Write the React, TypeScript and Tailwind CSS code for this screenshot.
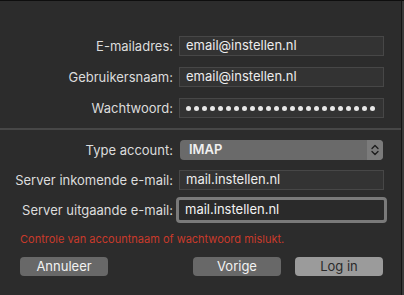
import React from "react";

const font = { fontFamily: "Inter, 'Liberation Sans', sans-serif" };

function Row({ label, children }: { label: string; children: React.ReactNode }) {
  return (
    <div className="flex h-[20px] items-center">
      <div className="w-[179px] shrink-0 pr-[6px] text-right text-[13px] leading-[20px] text-[#dcdcdc]">{label}</div>
      {children}
    </div>
  );
}

function Field({ value }: { value: string }) {
  return (
    <div className="flex h-[20px] w-[205px] shrink-0 items-center border border-[#474747] bg-[#333333] pl-[6px] text-[13px] text-[#ececec]">
      {value}
    </div>
  );
}

const dots = Array.from({ length: 24 }, (_, i) => i);

export default function App() {
  return (
    <div className="flex h-[295px] w-[404px] overflow-hidden border-t border-[#0e0e0e] bg-[#2c2c2c]" style={font}>
      <div className="flex w-[401px] shrink-0 flex-col">
        <div className="flex flex-col gap-[11px] pt-[35px]">
          <Row label="E-mailadres:">
            <Field value="email@instellen.nl" />
          </Row>
          <Row label="Gebruikersnaam:">
            <Field value="email@instellen.nl" />
          </Row>
          <Row label="Wachtwoord:">
            <div className="flex h-[20px] w-[205px] shrink-0 items-center gap-[3px] border border-[#474747] bg-[#333333] pl-[6px]">
              {dots.map((i) => (
                <span key={i} className="h-[5px] w-[5px] shrink-0 rounded-full bg-[#e8e8e8]" />
              ))}
            </div>
          </Row>
        </div>
        <div className="mt-[10px] h-[2px] bg-[#474747]" />
        <div className="mt-[10px] flex flex-col gap-[10px]">
          <Row label="Type account:">
            <div className="ml-[1px] flex h-[20px] w-[203px] shrink-0 overflow-hidden rounded-[4px] bg-[#6a6a6a]">
              <div className="flex flex-1 items-center pl-[9px] text-[13px] font-semibold text-[#f0f0f0]">IMAP</div>
              <div className="flex w-[16px] items-center justify-center bg-[#7b7b7b]">
                <svg width="8" height="12" viewBox="0 0 8 12" fill="none" stroke="#1c1c1c" strokeWidth="1.3" strokeLinecap="round" strokeLinejoin="round">
                  <path d="M1 4.5 L4 1.5 L7 4.5" />
                  <path d="M1 7.5 L4 10.5 L7 7.5" />
                </svg>
              </div>
            </div>
          </Row>
          <Row label="Server inkomende e-mail:">
            <Field value="mail.instellen.nl" />
          </Row>
          <Row label="Server uitgaande e-mail:">
            <div className="flex h-[20px] w-[205px] shrink-0 items-center rounded-[1px] bg-[#2a2a2a] pl-[6px] text-[13px] text-[#f2f2f2] outline outline-[3px] outline-[#7a7a7a]">
              mail.instellen.nl
            </div>
          </Row>
        </div>
        <div className="mt-[12px] pl-[20px] text-[11px] leading-[14px] text-[#c93a2b]">
          Controle van accountnaam of wachtwoord mislukt.
        </div>
        <div className="mt-[11px] flex pl-[20px]">
          <button className="h-[19px] w-[88px] rounded-[4px] bg-[#686868] text-[13px] leading-[19px] text-[#f2f2f2]">Annuleer</button>
          <button className="ml-[85px] h-[19px] w-[88px] rounded-[4px] bg-[#686868] text-[13px] leading-[19px] text-[#f2f2f2]">Vorige</button>
          <button className="ml-[14px] h-[19px] w-[88px] rounded-[4px] bg-[#9b9b9b] text-[13px] leading-[19px] text-[#2a2a2a]">Log in</button>
        </div>
      </div>
      <div className="w-px bg-[#151515]" />
      <div className="flex-1 bg-[#3a3a3a]" />
    </div>
  );
}
